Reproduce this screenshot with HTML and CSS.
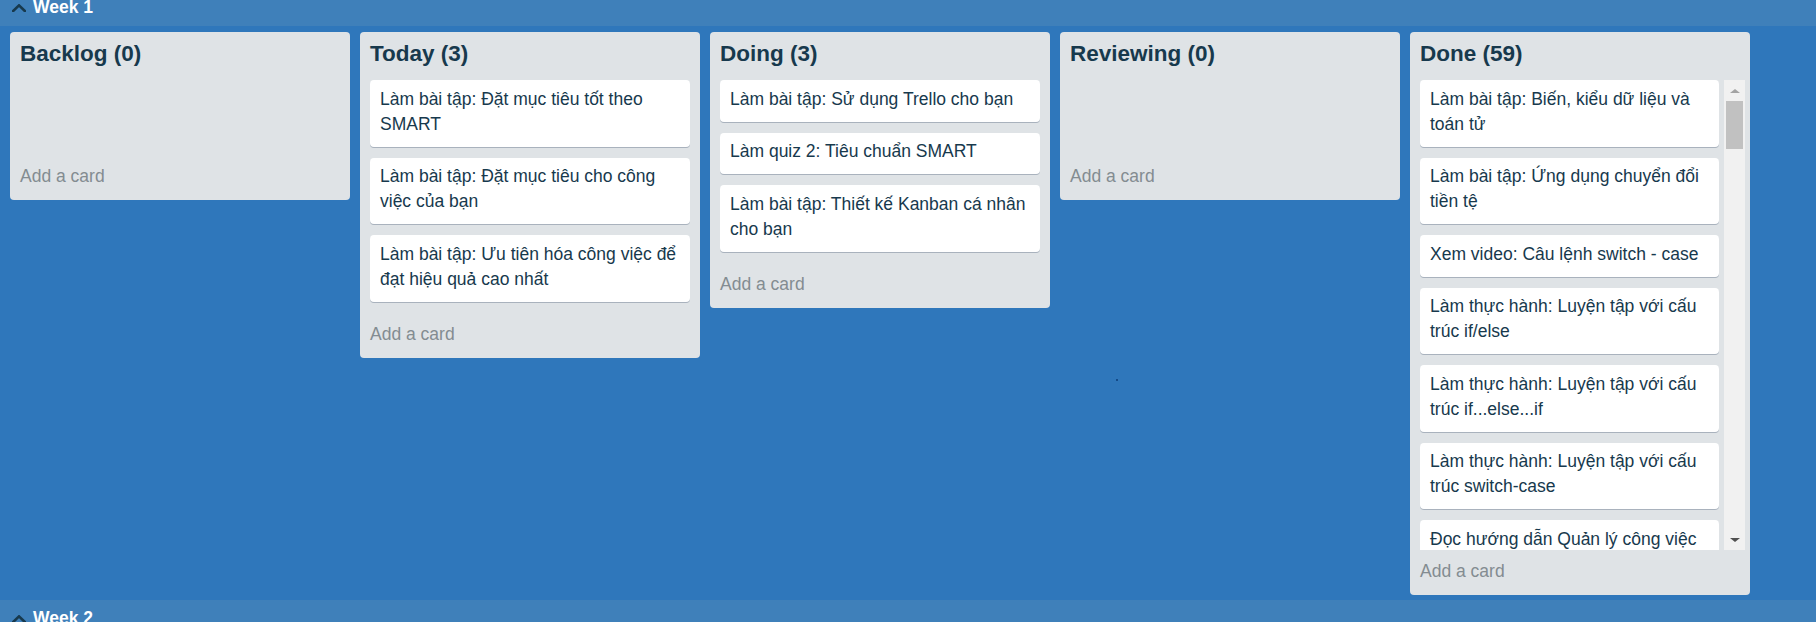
FILE: index.html
```html
<!DOCTYPE html>
<html lang="vi">
<head>
<meta charset="utf-8">
<title>Kanban board</title>
<link rel="stylesheet" href="styles.css">
</head>
<body>
<div class="page">
  <section class="week">
    <div class="week-bar">
      <svg class="chev" width="14" height="8" viewBox="0 0 14 8"><path d="M1.2 7 L7 1.4 L12.8 7" fill="none" stroke="#17394d" stroke-width="2.6" stroke-linecap="square"/></svg>
      <span class="week-label">Week 1</span>
    </div>
    <div class="lists">
      <div class="list">
        <h2 class="list-title">Backlog (0)</h2>
        <div class="list-cards"></div>
        <div class="add-card">Add a card</div>
      </div>
      <div class="list">
        <h2 class="list-title">Today (3)</h2>
        <div class="list-cards">
          <div class="card">Làm bài tập: Đặt mục tiêu tốt theo SMART</div>
          <div class="card">Làm bài tập: Đặt mục tiêu cho công việc của bạn</div>
          <div class="card">Làm bài tập: Ưu tiên hóa công việc để đạt hiệu quả cao nhất</div>
        </div>
        <div class="add-card">Add a card</div>
      </div>
      <div class="list">
        <h2 class="list-title">Doing (3)</h2>
        <div class="list-cards">
          <div class="card">Làm bài tập: Sử dụng Trello cho bạn</div>
          <div class="card">Làm quiz 2: Tiêu chuẩn SMART</div>
          <div class="card">Làm bài tập: Thiết kế Kanban cá nhân cho bạn</div>
        </div>
        <div class="add-card">Add a card</div>
      </div>
      <div class="list">
        <h2 class="list-title">Reviewing (0)</h2>
        <div class="list-cards"></div>
        <div class="add-card">Add a card</div>
      </div>
      <div class="list">
        <h2 class="list-title">Done (59)</h2>
        <div class="list-cards scrolling">
          <div class="viewport">
            <div class="card">Làm bài tập: Biến, kiểu dữ liệu và toán tử</div>
            <div class="card">Làm bài tập: Ứng dụng chuyển đổi tiền tệ</div>
            <div class="card">Xem video: Câu lệnh switch - case</div>
            <div class="card">Làm thực hành: Luyện tập với cấu trúc if/else</div>
            <div class="card">Làm thực hành: Luyện tập với cấu trúc if...else...if</div>
            <div class="card">Làm thực hành: Luyện tập với cấu trúc switch-case</div>
            <div class="card">Đọc hướng dẫn Quản lý công việc</div>
          </div>
          <div class="scrollbar">
            <div class="sb-btn"><span class="tri-up"></span></div>
            <div class="sb-track"><div class="sb-thumb"></div></div>
            <div class="sb-btn"><span class="tri-down"></span></div>
          </div>
        </div>
        <div class="add-card">Add a card</div>
      </div>
    </div>
  </section>
  <section class="week">
    <div class="week-bar">
      <svg class="chev" width="14" height="8" viewBox="0 0 14 8"><path d="M1.2 7 L7 1.4 L12.8 7" fill="none" stroke="#17394d" stroke-width="2.6" stroke-linecap="square"/></svg>
      <span class="week-label">Week 2</span>
    </div>
  </section>
</div>
<span class="speck"></span>
</body>
</html>
```
FILE: styles.css
```css
html, body {
  margin: 0;
  padding: 0;
}
body {
  background: #2f77bb;
  font-family: "Liberation Sans", Arial, sans-serif;
  color: #17394d;
  overflow: hidden;
}
.page {
  margin-top: -11px;
}
.week-bar {
  background: #3f80ba;
  height: 37px;
  box-sizing: border-box;
  padding: 6px 0 6px 12px;
  display: flex;
  align-items: center;
}
.chev {
  display: block;
  margin-right: 7px;
}
.week-label {
  color: #ffffff;
  font-weight: bold;
  font-size: 17.5px;
  line-height: 25px;
}
.lists {
  display: flex;
  align-items: flex-start;
  gap: 10px;
  padding: 6px 10px 5px 10px;
}
.list {
  width: 340px;
  flex: 0 0 340px;
  background: #dfe3e6;
  border-radius: 4px;
}
.list-title {
  margin: 0;
  padding: 8px 10px 12px 10px;
  font-size: 22.5px;
  line-height: 28px;
  font-weight: bold;
  color: #17394d;
}
.list-cards {
  margin: 0 5px;
  padding: 0 5px;
  min-height: 75px;
}
.card {
  background: #ffffff;
  border-radius: 4px;
  box-shadow: 0 1px 0 rgba(9, 30, 66, 0.25);
  padding: 6.5px 10px 10px 10px;
  margin-bottom: 11px;
  font-size: 17.5px;
  line-height: 25px;
  color: #17394d;
}
.add-card {
  padding: 9px 10px 11px 10px;
  font-size: 17.5px;
  line-height: 25px;
  color: #838c91;
}
.list-cards.scrolling {
  display: flex;
  height: 470px;
  padding-right: 0;
}
.viewport {
  flex: 1;
  overflow: hidden;
  padding-right: 5px;
}
.scrollbar {
  width: 21px;
  flex: 0 0 21px;
  background: #f1f1f1;
  display: flex;
  flex-direction: column;
}
.sb-btn {
  height: 21px;
  flex: 0 0 21px;
  display: flex;
  align-items: center;
  justify-content: center;
}
.tri-up {
  width: 0;
  height: 0;
  border-left: 5px solid transparent;
  border-right: 5px solid transparent;
  border-bottom: 4.5px solid #a3a3a3;
}
.tri-down {
  width: 0;
  height: 0;
  border-left: 5px solid transparent;
  border-right: 5px solid transparent;
  border-top: 4.5px solid #505050;
}
.sb-track {
  flex: 1;
}
.sb-thumb {
  margin: 0 2px;
  height: 48px;
  background: #c1c1c1;
}
.speck {
  position: absolute;
  left: 1116px;
  top: 379px;
  width: 2px;
  height: 2px;
  border-radius: 1px;
  background: #0c3d78;
}
```
